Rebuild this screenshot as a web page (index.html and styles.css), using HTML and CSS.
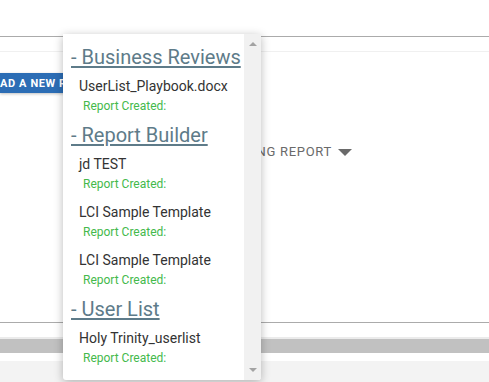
FILE: index.html
```html
<!DOCTYPE html>
<html lang="en">
<head>
<meta charset="UTF-8">
<title>Reports</title>
<meta name="viewport" content="width=device-width, initial-scale=1.0">
<link rel="stylesheet" href="styles.css">
</head>
<body>
<div class="topbar"></div>

<div class="panel">
<div class="subbar"></div>
<div class="content">
<button class="upload-btn">AD A NEW REPORT</button>
<div class="existing">
<span class="existing-label">LOAD EXISTING REPORT</span>
<span class="caret"></span>
</div>
</div>
</div>

<div class="gap"></div>
<div class="hscroll"></div>
<div class="footer"></div>

<div class="report-menu">
<div class="menu-list">
<div class="group-title">- Business Reviews</div>
<div class="report-item">
<div class="report-name">UserList_Playbook.docx</div>
<div class="report-date">Report Created:</div>
</div>

<div class="group-title">- Report Builder</div>
<div class="report-item">
<div class="report-name">jd TEST</div>
<div class="report-date">Report Created:</div>
</div>
<div class="report-item">
<div class="report-name">LCI Sample Template</div>
<div class="report-date">Report Created:</div>
</div>
<div class="report-item">
<div class="report-name">LCI Sample Template</div>
<div class="report-date">Report Created:</div>
</div>

<div class="group-title">- User List</div>
<div class="report-item">
<div class="report-name">Holy Trinity_userlist</div>
<div class="report-date">Report Created:</div>
</div>
</div>
<div class="menu-scroll">
<span class="arrow-up"></span>
<span class="arrow-down"></span>
</div>
</div>
</body>
</html>
```

FILE: styles.css
```css
body {
font-family: Roboto, 'Liberation Sans', sans-serif;
margin: 0;
background: #fff;
}

.topbar {
height: 36px;
border-bottom: 1px solid #ababab;
}

.panel {
height: 286px;
box-sizing: border-box;
border-bottom: 1px solid #ababab;
}

.subbar {
height: 14px;
border-bottom: 1px solid #f0f0f0;
}

.content {
padding-top: 21px;
}

.upload-btn {
display: block;
height: 20px;
width: 80px;
padding: 0;
border: none;
border-radius: 0 2px 2px 0;
background: #2c6db5;
color: #fff;
font-family: Roboto, 'Liberation Sans', sans-serif;
font-size: 11px;
font-weight: bold;
letter-spacing: 0.6px;
text-align: left;
white-space: nowrap;
overflow: hidden;
box-shadow: 0 1px 3px rgba(0,0,0,0.25);
}

.existing {
display: flex;
justify-content: flex-end;
align-items: center;
margin-top: 49px;
padding-right: 137px;
height: 20px;
}

.existing-label {
font-size: 13px;
letter-spacing: 0.7px;
color: #6a6a6a;
line-height: 20px;
}

.caret {
width: 0;
height: 0;
margin-left: 6px;
border-left: 7px solid transparent;
border-right: 7px solid transparent;
border-top: 7px solid #6a6a6a;
}

.gap {
height: 14px;
}

.hscroll {
height: 14px;
background: #c1c1c1;
border-top: 2px solid #ebebeb;
margin-bottom: 8px;
}

.footer {
height: 30px;
background: #f3f3f3;
}

/* dropdown list */
.report-menu {
position: absolute;
left: 63px;
top: 34px;
width: 198px;
height: 346px;
display: flex;
background: #fff;
border-radius: 0 0 3px 3px;
box-shadow: 0 2px 10px rgba(0,0,0,0.28);
overflow: hidden;
}

.menu-list {
flex: 1;
padding: 8px 0;
}

.group-title {
font-size: 20px;
line-height: 30px;
padding-left: 8px;
color: #5e7b89;
white-space: nowrap;
text-decoration: underline;
text-decoration-thickness: 2px;
text-underline-offset: 2px;
}

.report-item {
padding: 4px 0;
}

.report-name {
font-size: 14px;
line-height: 20px;
padding-left: 16px;
color: #333;
}

.report-date {
font-size: 12px;
line-height: 20px;
padding-left: 20px;
color: #44b94c;
}

.menu-scroll {
width: 17px;
background: #f1f1f1;
display: flex;
flex-direction: column;
justify-content: space-between;
align-items: center;
padding: 8px 0;
box-sizing: border-box;
}

.arrow-up {
width: 0;
height: 0;
border-left: 4px solid transparent;
border-right: 4px solid transparent;
border-bottom: 4px solid #a3a3a3;
}

.arrow-down {
width: 0;
height: 0;
border-left: 4px solid transparent;
border-right: 4px solid transparent;
border-top: 4px solid #a3a3a3;
}
```
